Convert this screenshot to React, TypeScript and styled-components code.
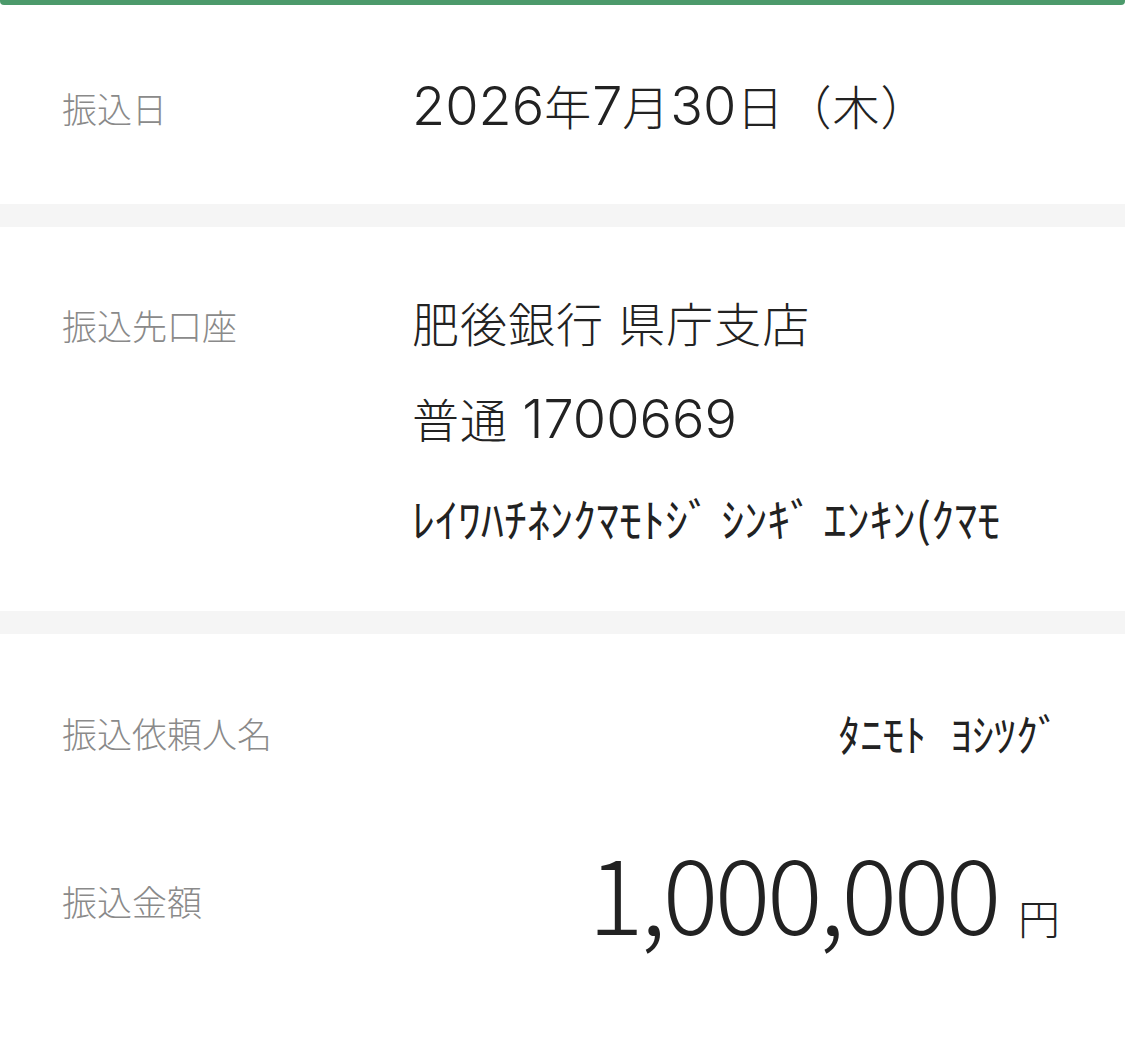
import React from "react";
import styled, { createGlobalStyle } from "styled-components";

const Global = createGlobalStyle`
  html, body { margin: 0; padding: 0; background: #ffffff; }
  body { font-family: "Noto Sans CJK JP", "Noto Sans", sans-serif; color: #222; }
`;

const Page = styled.div`
  width: 1125px;
  min-height: 1037px;
  background: #fff;
  display: flex;
  flex-direction: column;
  overflow: hidden;
`;

const TopBar = styled.div`
  height: 5px;
  background: #4c9a6b;
  border-radius: 0 0 4px 4px;
  box-shadow: 0 14px 50px rgba(0, 0, 0, 0.035);
`;

const Section = styled.section<{ $pt: number; $pb: number }>`
  display: flex;
  flex-direction: column;
  padding: ${(p) => p.$pt}px 65px ${(p) => p.$pb}px 62px;
`;

const Divider = styled.div`
  height: 23px;
  background: #f5f5f5;
`;

const Row = styled.div<{ $align?: string; $mt?: number }>`
  display: flex;
  align-items: ${(p) => p.$align || "flex-start"};
  margin-top: ${(p) => p.$mt || 0}px;
`;

const Label = styled.div<{ $shift?: number }>`
  width: 350px;
  flex-shrink: 0;
  font-size: 35px;
  line-height: 68px;
  font-weight: 300;
  color: #8a8a8a;
  margin-top: ${(p) => p.$shift || 0}px;
`;

const Values = styled.div`
  display: flex;
  flex-direction: column;
  gap: 28px;
`;

const Value = styled.div`
  font-family: "Inter", "Noto Sans CJK JP", sans-serif;
  font-size: 47px;
  height: 68px;
  line-height: 68px;
  font-weight: 300;
  letter-spacing: 1px;
  color: #222;
  white-space: pre;
`;

const Num = styled.span`
  font-size: 54px;
  line-height: 1;
  letter-spacing: 0;
`;

const Kana = styled.div`
  font-size: 46px;
  line-height: 68px;
  color: #222;
  white-space: pre;
`;

const RightValue = styled.div`
  flex: 1;
  text-align: right;
  font-size: 44px;
  line-height: 68px;
  word-spacing: 14px;
  color: #222;
  white-space: pre;
`;

const Amount = styled.div`
  flex: 1;
  display: flex;
  justify-content: flex-end;
  align-items: baseline;
  gap: 20px;
  color: #222;
`;

const Digits = styled.span`
  font-size: 104px;
  font-weight: 300;
  letter-spacing: -3.5px;
  line-height: 125px;
`;

const Yen = styled.span`
  font-size: 42px;
  font-weight: 300;
`;

export default function App() {
  return (
    <Page>
      <Global />
      <TopBar />
      <Section $pt={69} $pb={62}>
        <Row $align="center">
          <Label>振込日</Label>
          <Value>
            <Num>2026</Num>年<Num>7</Num>月<Num>30</Num>日（木）
          </Value>
        </Row>
      </Section>
      <Divider />
      <Section $pt={64} $pb={60}>
        <Row>
          <Label>振込先口座</Label>
          <Values>
            <Value>肥後銀行 県庁支店</Value>
            <Value>
              普通 <Num>1700669</Num>
            </Value>
            <Kana>ﾚｲﾜﾊﾁﾈﾝｸﾏﾓﾄｼﾞ ｼﾝｷﾞ ｴﾝｷﾝ(ｸﾏﾓ</Kana>
          </Values>
        </Row>
      </Section>
      <Divider />
      <Section $pt={65} $pb={40}>
        <Row $align="center">
          <Label>振込依頼人名</Label>
          <RightValue>ﾀﾆﾓﾄ ﾖｼﾂｸﾞ</RightValue>
        </Row>
        <Row $align="center" $mt={60}>
          <Label $shift={22}>振込金額</Label>
          <Amount>
            <Digits>1,000,000</Digits>
            <Yen>円</Yen>
          </Amount>
        </Row>
      </Section>
    </Page>
  );
}
